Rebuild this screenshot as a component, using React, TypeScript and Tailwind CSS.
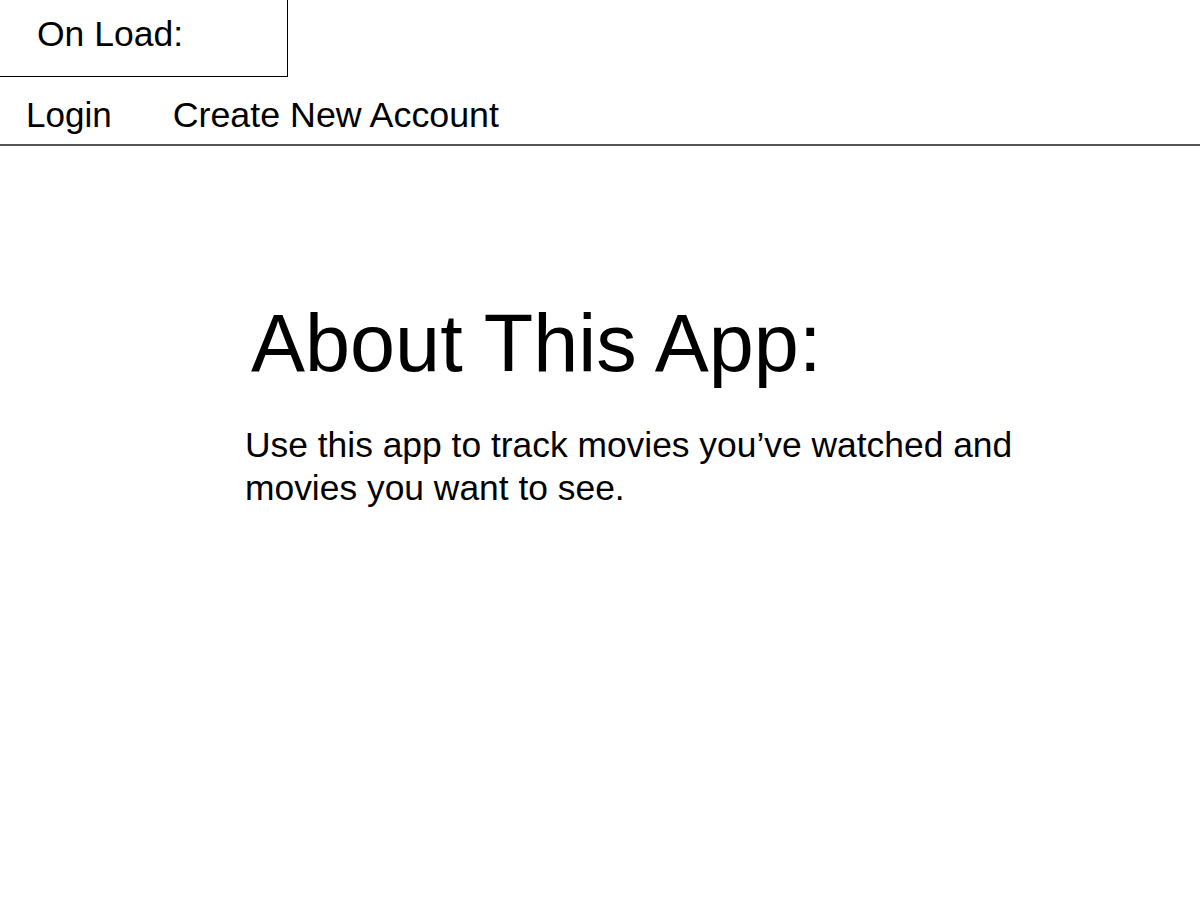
export default function App() {
  return (
    <div className="min-h-[900px] w-full bg-white text-black" style={{ fontFamily: '"Liberation Sans", Arial, sans-serif' }}>
      <div className="h-[77px] w-[288px] border-b border-r border-black pl-[37px] pt-[14px] text-[35.5px] leading-[40px]">
        On Load:
      </div>
      <nav className="flex gap-[61px] pl-[26px] pt-[18px] pb-[9px] text-[35px] leading-[40px]">
        <a>Login</a>
        <a className="text-[35.8px]">Create New Account</a>
      </nav>
      <div className="h-[2px] w-full bg-[#555]" />
      <main className="pl-[245px]">
        <h1 className="mt-[157px] pl-[6px] text-[81px] leading-[80px]">About This App:</h1>
        <p className="mt-[41px] w-[820px] text-[35.4px] leading-[43px]">
          Use this app to track movies you’ve watched and movies you want to see.
        </p>
      </main>
    </div>
  );
}
